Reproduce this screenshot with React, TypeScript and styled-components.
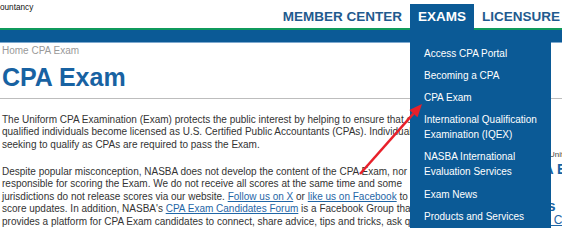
import React from "react";
import styled, { createGlobalStyle } from "styled-components";

const Global = createGlobalStyle`
  html, body { margin: 0; padding: 0; background: #fff; }
  body { overflow: hidden; }
`;

const BLUE = "#0b5a96";

const Page = styled.div`
  position: relative;
  width: 562px;
  height: 229px;
  overflow: hidden;
  font-family: "Liberation Sans", Arial, sans-serif;
  background: #fff;
`;

const HeaderRow = styled.div`
  display: flex;
  justify-content: space-between;
  align-items: flex-start;
  height: 28px;
`;

const Logo = styled.div`
  font-size: 8.2px;
  line-height: 10px;
  color: #111;
  padding-top: 3px;
`;

const Nav = styled.nav`
  display: flex;
  margin-top: 4px;
  margin-right: -6px;
`;

const NavItem = styled.div<{ $active?: boolean }>`
  position: relative;
  z-index: 2;
  height: 26px;
  line-height: 26px;
  padding: 0 8px;
  font-size: 13.5px;
  font-weight: bold;
  color: ${(p) => (p.$active ? "#fff" : "#1f5a8e")};
  background: ${(p) => (p.$active ? BLUE : "transparent")};
  white-space: nowrap;
`;

const Dropdown = styled.ul`
  position: absolute;
  top: 38px;
  left: 0;
  width: 141px;
  margin: 0;
  padding: 0 0 1px;
  list-style: none;
  background: ${BLUE};
  z-index: 5;
`;

const DropItem = styled.li`
  padding: 3.6px 6px 3.6px 14px;
  font-size: 10px;
  line-height: 15px;
  font-weight: normal;
  color: #fff;
  white-space: normal;
`;

const GreenLine = styled.div`
  height: 2px;
  background: #0f9a5c;
`;

const BlueBar = styled.div`
  height: 12px;
  background: ${BLUE};
  border-bottom: 1px solid #7ea9cf;
`;

const Content = styled.div`
  padding: 0 2px;
`;

const Breadcrumb = styled.div`
  margin-top: 2px;
  font-size: 10px;
  line-height: 12px;
  color: #999;
`;

const Title = styled.h1`
  margin: 5px 0 0;
  font-size: 25px;
  line-height: 30px;
  font-weight: bold;
  color: #1862a2;
`;

const Rule = styled.hr`
  margin: 6px -2px 0;
  border: 0;
  border-top: 1px solid #bdbdbd;
`;

const Columns = styled.div`
  display: grid;
  grid-template-columns: 523px 1fr;
  margin-top: 15px;
`;

const Para = styled.p`
  margin: 0 0 14.8px;
  font-size: 10px;
  line-height: 12.4px;
  color: #333;
  white-space: nowrap;
`;

const Link = styled.a`
  color: #1f66a6;
  text-decoration: underline;
`;

const Sidebar = styled.aside`
  padding-top: 36px;
  white-space: nowrap;
`;

const SideSmall = styled.div`
  margin-left: 8px;
  font-size: 8px;
  line-height: 10px;
  color: #444;
`;

const SideHeading = styled.div<{ $size: number; $gap: number }>`
  margin-top: ${(p) => p.$gap}px;
  font-size: ${(p) => p.$size}px;
  line-height: ${(p) => p.$size + 2}px;
  font-weight: bold;
  color: #1862a2;
`;

const SideLink = styled.a`
  display: block;
  font-size: 12px;
  line-height: 13px;
  color: #1f66a6;
  text-decoration: underline;
`;

const ArrowLayer = styled.svg`
  position: absolute;
  inset: 0;
  z-index: 20;
  pointer-events: none;
`;

const menu = [
  "Access CPA Portal",
  "Becoming a CPA",
  "CPA Exam",
  "International Qualification Examination (IQEX)",
  "NASBA International Evaluation Services",
  "Exam News",
  "Products and Services",
];

export default function App() {
  return (
    <Page>
      <Global />
      <HeaderRow>
        <Logo>ountancy</Logo>
        <Nav>
          <NavItem>MEMBER CENTER</NavItem>
          <NavItem $active>
            EXAMS
            <Dropdown>
              {menu.map((m) => (
                <DropItem key={m}>{m}</DropItem>
              ))}
            </Dropdown>
          </NavItem>
          <NavItem>LICENSURE</NavItem>
        </Nav>
      </HeaderRow>
      <GreenLine />
      <BlueBar />
      <Content>
        <Breadcrumb>Home CPA Exam</Breadcrumb>
        <Title>CPA Exam</Title>
        <Rule />
        <Columns>
          <div>
            <Para>
              The Uniform CPA Examination (Exam) protects the public interest by helping to ensure that only
              <br />
              qualified individuals become licensed as U.S. Certified Public Accountants (CPAs). Individuals
              <br />
              seeking to qualify as CPAs are required to pass the Exam.
            </Para>
            <Para>
              Despite popular misconception, NASBA does not develop the content of the CPA Exam, nor is it
              <br />
              responsible for scoring the Exam. We do not receive all scores at the same time and some
              <br />
              jurisdictions do not release scores via our website. <Link>Follow us on X</Link> or{" "}
              <Link>like us on Facebook</Link> to receive
              <br />
              score updates. In addition, NASBA's <Link>CPA Exam Candidates Forum</Link> is a Facebook Group that
              <br />
              provides a platform for CPA Exam candidates to connect, share advice, tips and tricks, ask questions
            </Para>
          </div>
          <Sidebar>
            <SideSmall>The Uniform</SideSmall>
            <SideHeading $size={14} $gap={1}>CPA Exam</SideHeading>
            <SideHeading $size={15} $gap={20}>Tips</SideHeading>
            <SideLink>Take CPA Exam</SideLink>
          </Sidebar>
        </Columns>
      </Content>
      <ArrowLayer width="562" height="229" viewBox="0 0 562 229">
        <line x1="360" y1="174" x2="413.4" y2="113.7" stroke="#e8202a" strokeWidth="2.5" />
        <polygon points="422,104 417.5,117.3 409.3,110.1" fill="#e8202a" />
      </ArrowLayer>
    </Page>
  );
}
